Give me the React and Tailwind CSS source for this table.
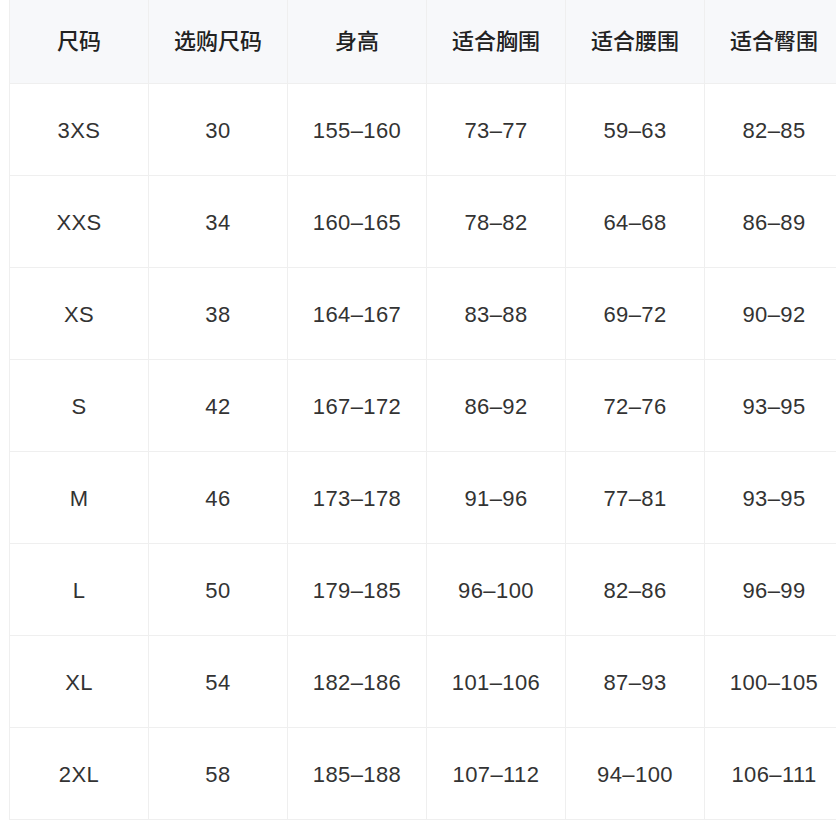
import React from "react";

const headers = ["尺码", "选购尺码", "身高", "适合胸围", "适合腰围", "适合臀围"];

const rows = [
  ["3XS", "30", "155–160", "73–77", "59–63", "82–85"],
  ["XXS", "34", "160–165", "78–82", "64–68", "86–89"],
  ["XS", "38", "164–167", "83–88", "69–72", "90–92"],
  ["S", "42", "167–172", "86–92", "72–76", "93–95"],
  ["M", "46", "173–178", "91–96", "77–81", "93–95"],
  ["L", "50", "179–185", "96–100", "82–86", "96–99"],
  ["XL", "54", "182–186", "101–106", "87–93", "100–105"],
  ["2XL", "58", "185–188", "107–112", "94–100", "106–111"],
];

const App = () => {
  return (
    <div className="w-[836px] h-[820px] overflow-hidden bg-white pl-[9px] font-['Liberation_Sans','Noto_Sans_CJK_SC',sans-serif]">
      <div className="grid grid-cols-[repeat(6,139px)] border-l border-[#efefef] w-max">
        {headers.map((h) => (
          <div
            key={h}
            className="h-[84px] flex items-center justify-center bg-[#f7f8fa] border-r border-b border-[#efefef] text-[22px] font-medium text-[#222]"
          >
            {h}
          </div>
        ))}
        {rows.map((row, i) =>
          row.map((cell, j) => (
            <div
              key={i + "-" + j}
              className="h-[92px] flex items-center justify-center border-r border-b border-[#efefef] text-[22px] tracking-[0.4px] text-[#333] pt-[2px]"
            >
              {cell}
            </div>
          ))
        )}
      </div>
    </div>
  );
};

export default App;
